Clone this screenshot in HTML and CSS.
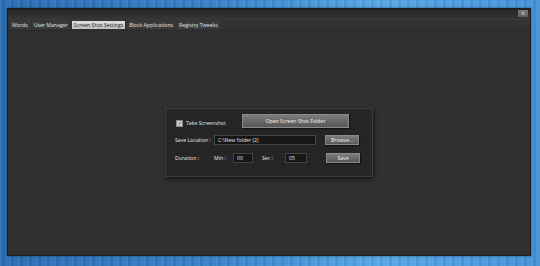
FILE: index.html
```html
<!DOCTYPE html>
<html lang="en">
<head>
    <meta charset="UTF-8">
    <title>Screen Shot Settings</title>
    <link rel="stylesheet" href="styles.css">
</head>
<body>
    <div class="window">
        <div class="titlebar">
            <span class="close-btn">x</span>
        </div>
        <div class="tabs">
            <span class="tab">Words</span>
            <span class="tab">User Manager</span>
            <span class="tab active">Screen Shot Settings</span>
            <span class="tab">Block Applications</span>
            <span class="tab">Registry Tweeks</span>
        </div>
        <div class="content">
            <div class="panel">
                <div class="row">
                    <label class="check">
                        <span class="box">&#10003;</span>
                        Take Screenshot
                    </label>
                    <span class="btn btn-open">Open Screen Shot Folder</span>
                </div>
                <div class="row row-mid">
                    <span class="lbl">Save Location :</span>
                    <span class="field field-path">C:\New folder (2)</span>
                    <span class="btn btn-small">Browse...</span>
                </div>
                <div class="row row-last">
                    <span class="lbl">Duration :</span>
                    <span class="lbl-min">Min :</span>
                    <span class="field field-min">00</span>
                    <span class="lbl-sec">Sec :</span>
                    <span class="field field-sec">05</span>
                    <span class="btn btn-small btn-save">Save</span>
                </div>
            </div>
        </div>
    </div>
</body>
</html>
```

FILE: styles.css
```css
html, body {
    height: 100%;
}

body {
    margin: 0;
    padding: 8px 9px 10px 7px;
    box-sizing: border-box;
    font-family: "Open Sans", "Liberation Sans", sans-serif;
    font-size: 5.2px;
    background-color: #3a86cf;
    background-image:
        repeating-linear-gradient(90deg, rgba(255,255,255,0.06) 0 2px, rgba(0,0,0,0.05) 2px 5px, rgba(255,255,255,0.03) 5px 9px),
        linear-gradient(90deg, #2b6db3 0%, #3782c8 40%, #55a6e6 70%, #4592d8 100%);
}

.window {
    height: 100%;
    display: flex;
    flex-direction: column;
    background-color: #303030;
    border: 1px solid #1e1e1e;
    box-sizing: border-box;
    box-shadow: 0 0 2px rgba(0,0,0,0.5);
}

.titlebar {
    height: 10px;
    display: flex;
    justify-content: flex-end;
    align-items: flex-start;
    padding-right: 2px;
    background: linear-gradient(#262626, #353535);
    border-bottom: 1px solid #3a3a3a;
}

.close-btn {
    width: 10px;
    height: 7px;
    margin-top: 1px;
    background: linear-gradient(#7a7a7a, #5c5c5c);
    color: #eee;
    font-size: 6px;
    line-height: 6px;
    text-align: center;
}

.tabs {
    height: 10px;
    display: flex;
    align-items: center;
    gap: 2px;
    padding-left: 2px;
    background-color: #323232;
    border-bottom: 1px solid #2a2a2a;
}

.tab {
    padding: 0 2px;
    height: 8px;
    line-height: 8px;
    background-color: #3a3a3a;
    color: #e4e4e4;
    white-space: nowrap;
}

.tab.active {
    background: linear-gradient(#e0e0e0, #bdbdbd);
    color: #222;
}

.content {
    flex: 1;
    display: flex;
    align-items: center;
    justify-content: center;
    padding-bottom: 1px;
}

.panel {
    width: 208px;
    height: 69px;
    box-sizing: border-box;
    padding: 5px 0 0 9px;
    background-color: #252525;
    border: 1px solid #3c3c3c;
    box-shadow: 1px 2px 4px rgba(0,0,0,0.6);
    color: #e8e8e8;
}

.row {
    display: flex;
    align-items: center;
    height: 14px;
}

.row-mid {
    height: 10px;
    margin-top: 7px;
}

.row-last {
    height: 10px;
    margin-top: 8px;
}

.check {
    width: 66px;
    display: flex;
    align-items: center;
    gap: 3px;
    margin-top: 4px;
    margin-left: 1px;
}

.box {
    width: 5px;
    height: 5px;
    border: 1px solid #888;
    background-color: #ccc;
    color: #333;
    font-size: 5px;
    line-height: 5px;
    text-align: center;
}

.btn {
    display: flex;
    align-items: center;
    justify-content: center;
    background: linear-gradient(#7c7c7c, #575757);
    border: 1px solid #8a8a8a;
    box-sizing: border-box;
    color: #f2f2f2;
    box-shadow: 1px 1px 1px rgba(0,0,0,0.5);
}

.btn-open {
    width: 107px;
    height: 14px;
}

.btn-small {
    width: 34px;
    height: 10px;
    margin-left: 9px;
}

.btn-save {
    margin-left: 19px;
}

.lbl {
    width: 39px;
    white-space: nowrap;
}

.lbl-min {
    width: 19px;
}

.lbl-sec {
    width: 23px;
    margin-left: 9px;
}

.field {
    height: 10px;
    box-sizing: border-box;
    padding-left: 3px;
    line-height: 9px;
    background-color: #161616;
    border: 1px solid #444;
    color: #e8e8e8;
}

.field-path {
    width: 102px;
}

.field-min {
    width: 20px;
}

.field-sec {
    width: 22px;
}
```
